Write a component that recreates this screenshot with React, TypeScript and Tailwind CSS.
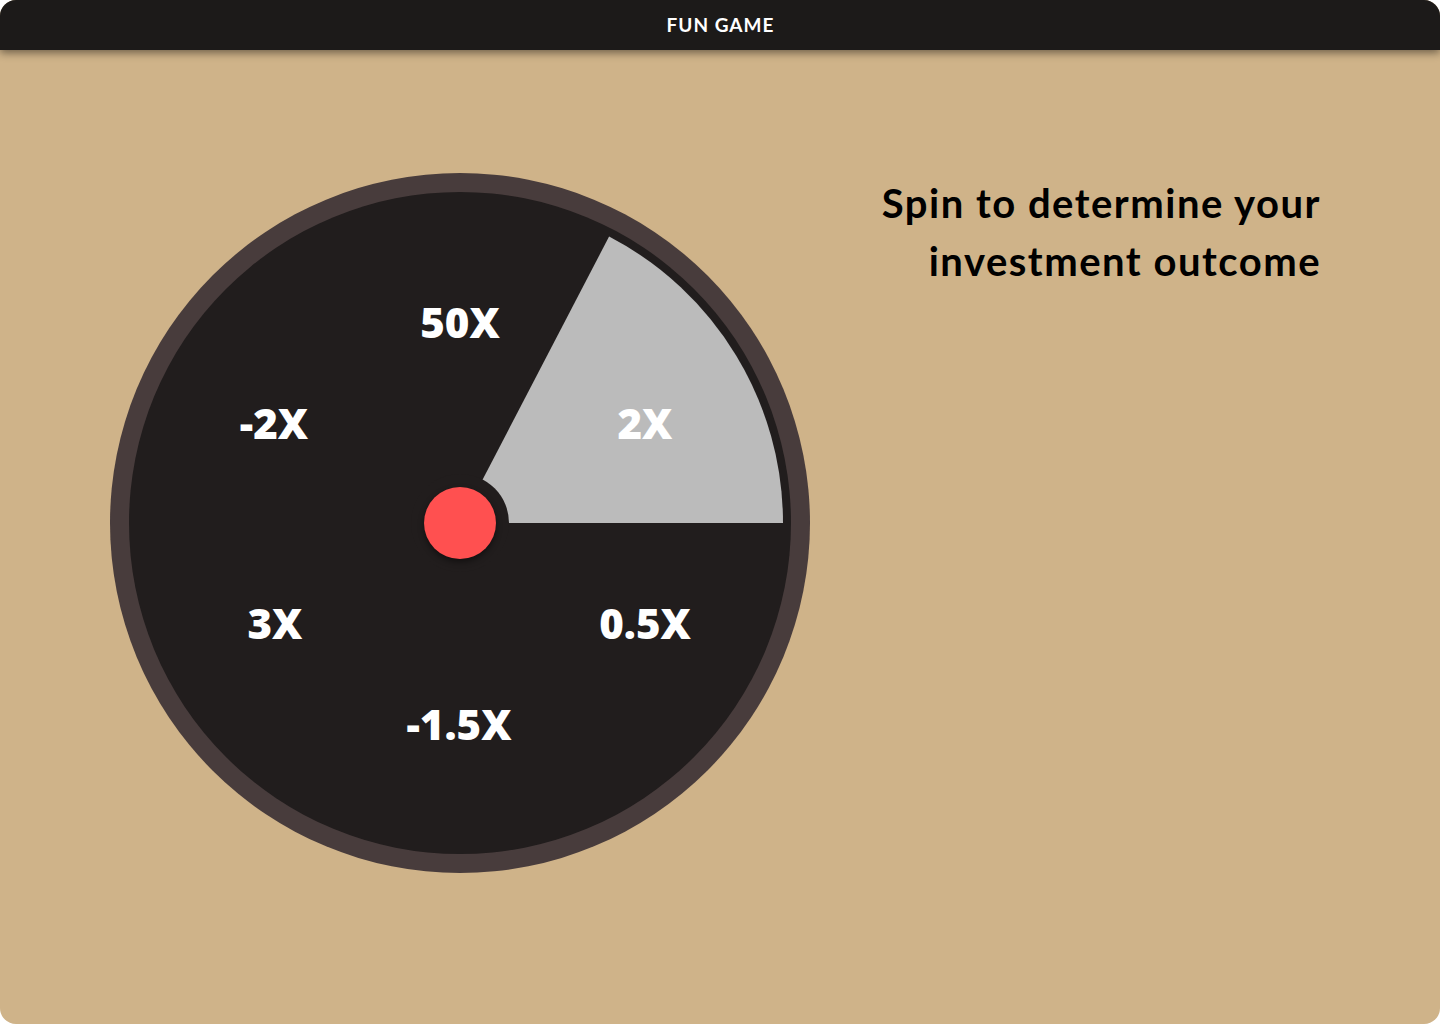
const labels = [
  { text: '50X', x: 350, y: 149 },
  { text: '2X', x: 535, y: 250 },
  { text: '-2X', x: 164, y: 250 },
  { text: '3X', x: 165, y: 450 },
  { text: '0.5X', x: 535, y: 450 },
  { text: '-1.5X', x: 349, y: 551 },
];

function Wheel() {
  return (
    <div className="relative w-[700px] h-[700px] rounded-full bg-[#483c3c] p-[19px]">
      <div className="w-full h-full rounded-full bg-[#211d1d]" />
      <svg className="absolute inset-0" width="700" height="700" viewBox="0 0 700 700">
        <path d="M350 350 L673 350 A323 323 0 0 0 499.1 63.5 Z" fill="#bbbbbb" />
        <circle cx="350" cy="350" r="49" fill="#211d1d" />
      </svg>
      {labels.map((l) => (
        <div
          key={l.text}
          className="absolute -translate-x-1/2 -translate-y-1/2 text-white text-[42px] font-extrabold leading-none whitespace-nowrap"
          style={{ left: l.x, top: l.y, fontFamily: '"Open Sans", sans-serif' }}
        >
          {l.text}
        </div>
      ))}
      <div className="absolute left-[314px] top-[314px] w-[72px] h-[72px] rounded-full bg-[#ff5050] shadow-[0_3px_6px_rgba(0,0,0,0.45)]" />
    </div>
  );
}

export default function App() {
  return (
    <div className="bg-white w-[1440px] h-[1024px]">
      <div
        className="flex flex-col h-[1024px] rounded-[16px] overflow-hidden bg-[#cfb389]"
        style={{ fontFamily: 'Lato, sans-serif' }}
      >
        <header className="relative z-10 h-[50px] shrink-0 bg-[#1c1a19] flex items-center justify-center shadow-[0_3px_8px_rgba(0,0,0,0.45)]">
          <span className="text-white text-[19px] font-bold tracking-[1px] pl-[1px]">FUN GAME</span>
        </header>
        <main className="flex justify-between">
          <div className="ml-[110px] mt-[123px]">
            <Wheel />
          </div>
          <h1 className="mr-[119px] mt-[124px] text-right text-black text-[40px] font-bold leading-[58px] tracking-[1.5px]">
            Spin to determine your
            <br />
            investment outcome
          </h1>
        </main>
      </div>
    </div>
  );
}
